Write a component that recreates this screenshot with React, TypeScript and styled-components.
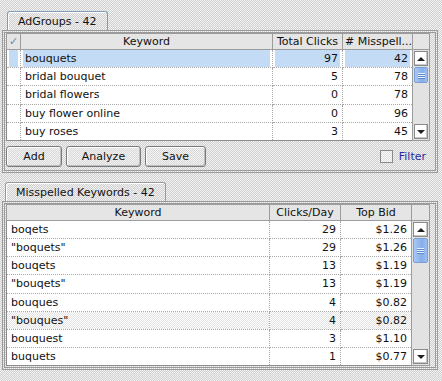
import React from 'react';
import styled, { createGlobalStyle, css } from 'styled-components';

const dither = (a: string, b: string) => css`
  background-color: ${b};
  background-image: repeating-conic-gradient(${a} 0% 25%, ${b} 0% 50%);
  background-size: 2px 2px;
`;

const GlobalStyle = createGlobalStyle`
  html, body {
    margin: 0;
    padding: 0;
  }
  body {
    font-family: "DejaVu Sans", Verdana, sans-serif;
    font-size: 11px;
    color: #111;
    ${dither('#cfcfcf', '#f2f2f2')}
  }
  * {
    box-sizing: border-box;
  }
`;

const Page = styled.div`
  width: 442px;
  height: 381px;
  padding: 11px 4px 0 2px;
  display: flex;
  flex-direction: column;
  gap: 9px;
`;

const Group = styled.section`
  display: flex;
  flex-direction: column;
  align-items: flex-start;
`;

const Tab = styled.div<{ $active?: boolean; $offset: number }>`
  height: 19px;
  display: flex;
  align-items: center;
  padding: 0 10px;
  margin-left: ${(p) => p.$offset}px;
  border: 1px solid ${(p) => (p.$active ? '#7f9db9' : '#9a9a9a')};
  border-bottom: none;
  border-radius: 3px 3px 0 0;
  box-shadow: inset 1px 1px #fff;
  white-space: nowrap;
`;

const Panel = styled.div`
  align-self: stretch;
  border: 3px double #9a9a9a;
  padding: 0 4px 1px 1px;
`;

const Table = styled.table`
  width: 424px;
  border-collapse: collapse;
  table-layout: fixed;
  border: 1px solid #8c8c8c;
  background: #fff;
`;

const Col = styled.col<{ $w?: number }>`
  ${(p) => p.$w && `width: ${p.$w}px;`}
`;

const Th = styled.th`
  height: 16px;
  padding: 0 2px;
  font-weight: normal;
  text-align: center;
  border: 1px solid #9c9c9c;
  white-space: nowrap;
  overflow: hidden;
  ${dither('#d6d6d6', '#f4f4f4')}
`;

const CheckMark = styled.span`
  color: #6d86b4;
  font-size: 11px;
`;

const Row = styled.tr<{ $shaded?: boolean }>`
  ${(p) => p.$shaded && dither('#e2e2e2', '#ffffff')}
`;

const Td = styled.td<{ $right?: boolean; $selected?: boolean }>`
  height: 18px;
  padding: 0 4px;
  border: 1px dotted #a8a8a8;
  text-align: ${(p) => (p.$right ? 'right' : 'left')};
  white-space: nowrap;
  overflow: hidden;
  ${(p) =>
    p.$selected &&
    css`
      ${dither('#b6d3f1', '#cfe3f7')}
      box-shadow: inset 2px 0 #fff, inset -2px 0 #fff;
    `}
`;

const ScrollCell = styled.td`
  padding: 0;
  vertical-align: top;
  border: 1px solid #9c9c9c;
  ${dither('#d2d2d2', '#f2f2f2')}
`;

const ScrollBar = styled.div<{ $h: number }>`
  height: ${(p) => p.$h}px;
  display: flex;
  flex-direction: column;
`;

const ScrollBtn = styled.div`
  height: 15px;
  margin: 1px;
  border: 1px solid #8a8a8a;
  background: #fff;
  display: flex;
  align-items: center;
  justify-content: center;
  box-shadow: inset -1px -1px #c8c8c8;
`;

const Arrow = styled.span<{ $down?: boolean }>`
  width: 0;
  height: 0;
  border-left: 4px solid transparent;
  border-right: 4px solid transparent;
  ${(p) => (p.$down ? 'border-top: 4px solid #222;' : 'border-bottom: 4px solid #222;')}
`;

const Track = styled.div`
  flex: 1;
`;

const Thumb = styled.div<{ $h: number }>`
  height: ${(p) => p.$h}px;
  margin: 0 1px;
  border: 1px solid #7a9ed6;
  border-radius: 2px;
  background: linear-gradient(90deg, #a9c8f4, #86aeea 60%, #9cbff2);
  display: flex;
  flex-direction: column;
  align-items: center;
  justify-content: center;
  gap: 1px;
`;

const Grip = styled.span`
  width: 7px;
  height: 1px;
  background: #e8f0fc;
  box-shadow: 0 1px #5f86c6;
`;

const Toolbar = styled.div`
  display: flex;
  align-items: center;
  gap: 4px;
  margin: 5px 0 2px;
`;

const Button = styled.button<{ $w: number }>`
  width: ${(p) => p.$w}px;
  height: 21px;
  padding: 0;
  font: inherit;
  color: #111;
  border: 1px solid #7a7a7a;
  border-radius: 3px;
  box-shadow: inset 1px 1px #fff, inset -1px -1px #bdbdbd;
  ${dither('#d8d8d8', '#f3f3f3')}
`;

const FilterLabel = styled.label`
  margin-left: auto;
  margin-right: 5px;
  display: flex;
  align-items: center;
  gap: 6px;
  color: #2c2ca0;
`;

const CheckBox = styled.span`
  width: 13px;
  height: 13px;
  border: 1px solid #8a8a8a;
  ${dither('#e0e0e0', '#fafafa')}
`;

type AdGroup = { keyword: string; clicks: number; misspelled: number };
type Misspelled = { keyword: string; clicks: number; bid: string; shaded?: boolean };

const adGroups: AdGroup[] = [
  { keyword: 'bouquets', clicks: 97, misspelled: 42 },
  { keyword: 'bridal bouquet', clicks: 5, misspelled: 78 },
  { keyword: 'bridal flowers', clicks: 0, misspelled: 78 },
  { keyword: 'buy flower online', clicks: 0, misspelled: 96 },
  { keyword: 'buy roses', clicks: 3, misspelled: 45 },
];

const misspelled: Misspelled[] = [
  { keyword: 'boqets', clicks: 29, bid: '$1.26' },
  { keyword: '"boquets"', clicks: 29, bid: '$1.26' },
  { keyword: 'bouqets', clicks: 13, bid: '$1.19' },
  { keyword: '"bouqets"', clicks: 13, bid: '$1.19' },
  { keyword: 'bouques', clicks: 4, bid: '$0.82' },
  { keyword: '"bouques"', clicks: 4, bid: '$0.82', shaded: true },
  { keyword: 'bouquest', clicks: 3, bid: '$1.10' },
  { keyword: 'buquets', clicks: 1, bid: '$0.77' },
];

function Scroller({ rows, thumb }: { rows: number; thumb: number }) {
  return (
    <ScrollCell rowSpan={rows}>
      <ScrollBar $h={rows * 18}>
        <ScrollBtn>
          <Arrow />
        </ScrollBtn>
        <Thumb $h={thumb}>
          <Grip />
          <Grip />
          <Grip />
        </Thumb>
        <Track />
        <ScrollBtn>
          <Arrow $down />
        </ScrollBtn>
      </ScrollBar>
    </ScrollCell>
  );
}

export default function App() {
  return (
    <>
      <GlobalStyle />
      <Page>
        <Group>
          <Tab $active $offset={5}>AdGroups - 42</Tab>
          <Panel>
            <Table>
              <colgroup>
                <Col $w={14} />
                <Col />
                <Col $w={70} />
                <Col $w={70} />
                <Col $w={17} />
              </colgroup>
              <thead>
                <tr>
                  <Th>
                    <CheckMark>✓</CheckMark>
                  </Th>
                  <Th>Keyword</Th>
                  <Th>Total Clicks</Th>
                  <Th># Misspell...</Th>
                  <Th />
                </tr>
              </thead>
              <tbody>
                {adGroups.map((g, i) => (
                  <Row key={g.keyword}>
                    <Td $selected={i === 0} />
                    <Td $selected={i === 0}>{g.keyword}</Td>
                    <Td $right $selected={i === 0}>{g.clicks}</Td>
                    <Td $right $selected={i === 0}>{g.misspelled}</Td>
                    {i === 0 && <Scroller rows={adGroups.length} thumb={16} />}
                  </Row>
                ))}
              </tbody>
            </Table>
            <Toolbar>
              <Button $w={56}>Add</Button>
              <Button $w={75}>Analyze</Button>
              <Button $w={61}>Save</Button>
              <FilterLabel>
                <CheckBox />
                Filter
              </FilterLabel>
            </Toolbar>
          </Panel>
        </Group>
        <Group>
          <Tab $offset={3}>Misspelled Keywords - 42</Tab>
          <Panel>
            <Table>
              <colgroup>
                <Col />
                <Col $w={71} />
                <Col $w={71} />
                <Col $w={18} />
              </colgroup>
              <thead>
                <tr>
                  <Th>Keyword</Th>
                  <Th>Clicks/Day</Th>
                  <Th>Top Bid</Th>
                  <Th />
                </tr>
              </thead>
              <tbody>
                {misspelled.map((m, i) => (
                  <Row key={m.keyword} $shaded={m.shaded}>
                    <Td>{m.keyword}</Td>
                    <Td $right>{m.clicks}</Td>
                    <Td $right>{m.bid}</Td>
                    {i === 0 && <Scroller rows={misspelled.length} thumb={25} />}
                  </Row>
                ))}
              </tbody>
            </Table>
          </Panel>
        </Group>
      </Page>
    </>
  );
}
